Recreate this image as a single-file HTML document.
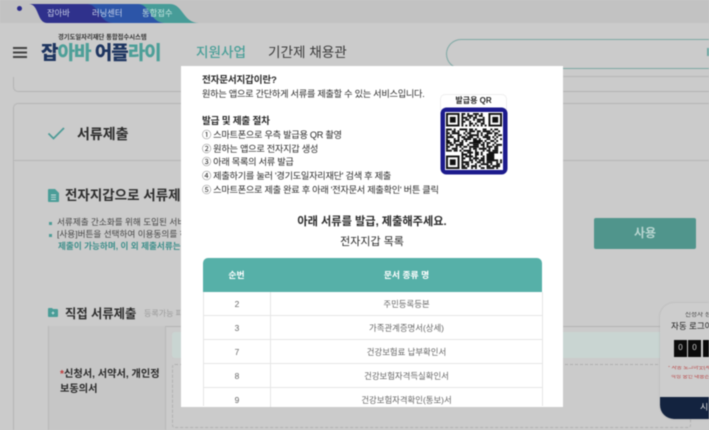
<!DOCTYPE html>
<html lang="ko"><head><meta charset="utf-8"><title>서류제출</title>
<style>
html,body{margin:0;padding:0;width:709px;height:430px;overflow:hidden}
body{position:relative;background:#cbcbcb;font-family:"Liberation Sans","Noto Sans CJK KR",sans-serif;color:#222}
.a{position:absolute;white-space:nowrap;line-height:1}
.b{font-weight:700}
#page{position:absolute;left:0;top:0;width:709px;height:430px;overflow:hidden;filter:blur(.45px)}
#modal{position:absolute;left:181px;top:66px;width:382px;height:341px;background:#fff;overflow:hidden}
#modal .a{color:#2b2b2b}
.m{font-size:9.2px;letter-spacing:-.28px}
.row{position:absolute;left:22px;width:338px;height:23px;border-bottom:1px solid #e6e6e6;border-left:1px solid #e6e6e6;border-right:1px solid #e6e6e6;box-sizing:content-box}
.row span{position:absolute;top:7px;font-size:8.4px;line-height:11px;color:#666;text-align:center}
.row .n{left:0;width:66px}
.row .t{left:67px;width:271px}
</style></head>
<body>
<div id="page">
<div class="a" style="left:0;top:0;width:709px;height:23px;background:#c2c2c2"></div>
<div class="a" style="left:17px;top:6px;width:5px;height:5px;border-radius:50%;background:#2c2c8a"></div>
<svg class="a" style="left:25px;top:3px" width="175" height="21" viewBox="0 0 175 21">
<path d="M105 1H145C158 1 158 20 174 20H120Z" fill="#479c98"/>
<path d="M55 1H113C125 1 125 20 140 20H70Z" fill="#2c55a8"/>
<path d="M4 1H62C74 1 74 20 88 20H22C12 20 14 1 4 1Z" fill="#2f318c"/>
</svg>
<div class="a" style="left:47px;top:9px;font-size:8.3px;color:#c9cfe6">잡아바</div>
<div class="a" style="left:92px;top:9px;font-size:8.3px;color:#c9d3ea">러닝센터</div>
<div class="a" style="left:142px;top:9px;font-size:8.3px;color:#c4e4df">통합접수</div>

<div class="a" style="left:13px;top:47px;width:14px;height:2px;background:#444;box-shadow:0 4.5px 0 #444,0 9px 0 #444"></div>
<div class="a b" style="left:58px;top:35px;font-size:6.3px;color:#333">경기도일자리재단 통합접수시스템</div>
<div class="a" style="left:41px;top:44px;font-size:19px;font-weight:900;letter-spacing:-1px;color:#1e3560">잡<span style="color:#4d9f98">아바</span> 어플<span style="color:#4d9f98">라이</span></div>
<div class="a" style="left:196px;top:46px;font-size:13.6px;font-weight:500;color:#4a9f98">지원사업</div>
<div class="a" style="left:268px;top:46px;font-size:13.6px;color:#3a3a3a">기간제 채용관</div>
<div class="a" style="left:446px;top:39px;width:263px;height:28px;box-sizing:content-box;border:1px solid #7fa9a5;border-right:0;border-radius:15px 0 0 15px;box-sizing:border-box;height:30px"></div>
<div class="a" style="left:707px;top:48px;width:2px;height:8px;background:#6fa8a3"></div>
<div class="a" style="left:13px;top:77px;width:696px;height:15px;box-sizing:border-box;border-left:1px solid #b4b4b4;border-bottom:1px solid #b4b4b4;border-radius:0 0 0 5px"></div>
<div class="a" style="left:563px;top:76px;width:146px;height:1px;background:#b8b8b8"></div>
<div class="a" style="left:13px;top:103px;width:696px;height:327px;box-sizing:border-box;border-left:1px solid #b6b6b6;border-top:1px solid #b6b6b6;border-radius:5px 0 0 0"></div>
<div class="a" style="left:14px;top:160px;width:695px;height:1px;background:#b8b8b8"></div>
<svg class="a" style="left:47px;top:126px" width="19" height="15" viewBox="0 0 19 15"><path d="M1.5 7.5L6.5 12.5L17 2" fill="none" stroke="#4f9c97" stroke-width="1.8"/></svg>
<div class="a b" style="left:77px;top:127px;font-size:14px;color:#2d2d2d">서류제출</div>
<svg class="a" style="left:48px;top:189px" width="11" height="13" viewBox="0 0 11 13"><path d="M0 1Q0 0 1 0H7L11 4V12Q11 13 10 13H1Q0 13 0 12Z" fill="#4a9d98"/><path d="M3 6H8M3 8.2H8M3 10.4H8" stroke="#cbe0de" stroke-width=".9"/></svg>
<div class="a b" style="left:65px;top:189px;font-size:13.5px;color:#2d2d2d">전자지갑으로 서류제출</div>
<div class="a" style="left:49px;top:222px;width:3px;height:3px;background:#4f9c97"></div>
<div class="a" style="left:57px;top:218px;font-size:8.6px;color:#444">서류제출 간소화를 위해 도입된 서비스</div>
<div class="a" style="left:49px;top:234px;width:3px;height:3px;background:#4f9c97"></div>
<div class="a" style="left:57px;top:230px;font-size:8.6px;color:#444">[사용]버튼을 선택하여 이용동의를 하</div>
<div class="a b" style="left:58px;top:242px;font-size:8.6px;color:#3f8f8b">제출이 가능하며, 이 외 제출서류는 반</div>
<div class="a" style="left:594px;top:218px;width:102px;height:31px;border-radius:2px;background:#50958c"></div>
<div class="a b" style="left:594px;top:227px;width:102px;text-align:center;font-size:12px;color:#b9d6d1">사용</div>

<svg class="a" style="left:48px;top:308px" width="10" height="9" viewBox="0 0 10 9"><path d="M0 1Q0 0 1 0H4L5 1H9Q10 1 10 2V8Q10 9 9 9H1Q0 9 0 8Z" fill="#4a9d98"/><path d="M3.5 5H6.5M5 3.5V6.5" stroke="#d8e8e6" stroke-width=".8"/></svg>
<div class="a b" style="left:65px;top:308px;font-size:12.3px;color:#2d2d2d">직접 서류제출</div>
<div class="a" style="left:144px;top:310px;font-size:8px;color:#999">등록가능 파</div>
<div class="a" style="left:48px;top:326px;width:661px;height:1px;background:#b4b4b4"></div>
<div class="a" style="left:48px;top:326px;width:118px;height:104px;box-sizing:border-box;background:#c6c6c6;border-left:1px solid #b8b8b8;border-right:1px solid #b8b8b8"></div>
<div class="a" style="left:172px;top:332px;width:520px;height:26px;border-radius:3px;background:#c9d5d2"></div>
<div class="a" style="left:172px;top:364px;width:517px;height:62px;border:1px dashed #b0b0b0;border-radius:3px"></div>
<div class="a b" style="left:60px;top:367px;font-size:10.2px;line-height:15px;color:#2a2a2a;white-space:normal;width:104px"><span style="color:#c03a3a">*</span>신청서, 서약서, 개인정<br>보동의서</div>

<div class="a" style="left:660px;top:303px;width:49px;height:116px;border-radius:14px 0 0 14px;background:#cdcdcd;overflow:hidden;box-shadow:0 0 2px rgba(0,0,0,.15)">
  <div class="a" style="left:0;bottom:0;width:49px;height:22px;background:#13233f"></div>
  <div class="a" style="left:40px;top:100px;width:9px;overflow:hidden;font-size:9px;color:#ddd">시</div>
  <div class="a" style="left:25px;top:9px;width:24px;overflow:hidden;font-size:6.5px;color:#444">신청자 정</div>
  <div class="a" style="left:11px;top:19px;width:38px;overflow:hidden;font-size:8.5px;color:#222">자동 로그아</div>
  <div class="a" style="left:14px;top:37px;width:13px;height:17px;background:#0b0b0b;color:#ccc;font-size:8px;line-height:15px;text-align:center">0</div>
  <div class="a" style="left:28px;top:37px;width:13px;height:17px;background:#0b0b0b;color:#ccc;font-size:8px;line-height:15px;text-align:center">0</div>
  <div class="a" style="left:43px;top:37px;width:6px;height:17px;background:#0b0b0b"></div>
  <div class="a" style="left:8px;top:63px;width:41px;overflow:hidden;font-size:5.5px;color:#b73a3a">* 자동 로그아웃(세</div>
  <div class="a" style="left:11px;top:72px;width:38px;overflow:hidden;font-size:5.5px;color:#b73a3a">작성 중인 내용은</div>
</div>

<div id="modal">
  <div class="a b" style="left:21px;top:10px;font-size:9.6px;letter-spacing:-.2px">전자문서지갑이란?</div>
  <div class="a m" style="left:21px;top:24px">원하는 앱으로 간단하게 서류를 제출할 수 있는 서비스입니다.</div>
  <div class="a b" style="left:21px;top:51px;font-size:9.6px;letter-spacing:-.2px">발급 및 제출 절차</div>
  <div class="a m" style="left:21px;top:65px">① 스마트폰으로 우측 발급용 QR 촬영</div>
  <div class="a m" style="left:21px;top:79px">② 원하는 앱으로 전자지갑 생성</div>
  <div class="a m" style="left:21px;top:92px">③ 아래 목록의 서류 발급</div>
  <div class="a m" style="left:21px;top:106px">④ 제출하기를 눌러 '경기도일자리재단' 검색 후 제출</div>
  <div class="a m" style="left:21px;top:120px">⑤ 스마트폰으로 제출 완료 후 아래 '전자문서 제출확인' 버튼 클릭</div>

  <div class="a" style="left:259px;top:28px;width:67px;height:16px;border:1px solid #eee;border-bottom:0;border-radius:5px 5px 0 0;box-sizing:border-box"></div>
  <div class="a b" style="left:259px;top:31px;width:67px;text-align:center;font-size:8px">발급용 QR</div>
  <svg class="a" style="left:259px;top:41px" width="68" height="68" viewBox="0 0 68 68">
    <rect x="0.5" y="0.5" width="67" height="67" rx="6" fill="#1c1a8c"/>
    <rect x="5" y="5" width="58" height="58" fill="#fff"/>
    <g transform="translate(6 6) scale(1.931)" fill="none" stroke="#111" stroke-width="1">
      <path d="M0 .5H7M22 .5H29M0 6.5H7M22 6.5H29M0 22.5H7M0 28.5H7"/>
      <path d="M.5 0V7M6.5 0V7M22.5 0V7M28.5 0V7M.5 22V29M6.5 22V29"/>
      <path fill="#111" stroke="none" d="M2 2h3v3H2zM24 2h3v3h-3zM2 24h3v3H2zM21 21h4v4h-4z"/>
      <path d="M8 .5H21" stroke-dasharray="2 1 1 2 3 1 1 2"/>
      <path d="M8 1.5H21" stroke-dasharray="1 2 3 1 1 1 2 2"/>
      <path d="M8 2.5H21" stroke-dasharray="3 1 1 1 2 3 1 1"/>
      <path d="M8 3.5H21" stroke-dasharray="1 1 2 2 1 1 4 1"/>
      <path d="M8 4.5H21" stroke-dasharray="2 2 1 3 2 1 1 1"/>
      <path d="M8 5.5H21" stroke-dasharray="1 3 2 1 1 2 2 1"/>
      <path d="M8 6.5H21" stroke-dasharray="1 1 1 1 1 1 1 1"/>
      <path d="M0 8.5H29" stroke-dasharray="3 1 1 2 4 1 2 1 1 3 2 2 1 1 2 2"/>
      <path d="M0 9.5H29" stroke-dasharray="1 2 2 1 1 3 1 1 3 1 2 1 4 1 1 2 1 2"/>
      <path d="M0 10.5H29" stroke-dasharray="2 1 4 2 1 1 2 3 1 1 1 2 3 1 2 2"/>
      <path d="M0 11.5H29" stroke-dasharray="1 1 1 3 2 2 1 1 5 1 1 1 2 3 1 1 2"/>
      <path d="M0 12.5H29" stroke-dasharray="4 2 1 1 2 1 3 2 1 2 4 1 1 1 1"/>
      <path d="M0 13.5H29" stroke-dasharray="1 3 1 1 1 2 4 1 2 1 1 3 2 2 1 2 1"/>
      <path d="M0 14.5H29" stroke-dasharray="2 2 3 1 1 1 1 3 5 1 1 2 2 1 1 2"/>
      <path d="M0 15.5H29" stroke-dasharray="3 1 1 2 2 3 6 1 1 1 2 2 1 3"/>
      <path d="M0 16.5H29" stroke-dasharray="1 1 2 1 4 2 1 2 3 1 2 1 1 2 1 1 3"/>
      <path d="M0 17.5H29" stroke-dasharray="2 3 1 1 1 1 2 1 5 2 1 1 3 1 2 2"/>
      <path d="M0 18.5H29" stroke-dasharray="1 2 3 2 1 3 1 1 2 1 4 1 1 2 2 2"/>
      <path d="M0 19.5H29" stroke-dasharray="3 1 2 1 1 1 4 2 1 3 1 1 2 1 3 2"/>
      <path d="M8 20.5H29" stroke-dasharray="1 2 3 1 2 1 1 3 5 1 1 1"/>
      <path d="M8 21.5H21" stroke-dasharray="3 1 1 2 2 1 1 2"/>
      <path d="M8 22.5H21" stroke-dasharray="1 1 4 1 1 3 1 1"/>
      <path d="M8 23.5H21" stroke-dasharray="2 2 1 1 3 1 2 1"/>
      <path d="M8 24.5H29" stroke-dasharray="1 3 2 1 1 1 3 2 1 1 3 1 2"/>
      <path d="M8 25.5H29" stroke-dasharray="4 1 1 2 2 1 1 1 3 2 1 1 1 1"/>
      <path d="M8 26.5H29" stroke-dasharray="1 1 2 3 1 2 4 1 1 2 2 1"/>
      <path d="M8 27.5H29" stroke-dasharray="2 1 1 1 3 1 1 3 2 1 4 2"/>
      <path d="M8 28.5H29" stroke-dasharray="3 2 1 1 1 2 2 1 4 1 1 2"/>
    </g>
  </svg>

  <div class="a b" style="left:0;top:151px;width:382px;text-align:center;font-size:11.2px">아래 서류를 발급, 제출해주세요.</div>
  <div class="a" style="left:0;top:171px;width:382px;text-align:center;font-size:11px">전자지갑 목록</div>

  <div class="a" style="left:22px;top:192px;width:339px;height:34px;background:#56b0a8;border-radius:5px 5px 0 0"></div>
  <div class="a b" style="left:22px;top:205px;width:67px;text-align:center;font-size:8.8px;color:#fff">순번</div>
  <div class="a b" style="left:90px;top:205px;width:271px;text-align:center;font-size:8.8px;color:#fff">문서 종류 명</div>
  <div class="row" style="top:226px"><span class="n">2</span><span class="t">주민등록등본</span></div>
  <div class="row" style="top:250px"><span class="n">3</span><span class="t">가족관계증명서(상세)</span></div>
  <div class="row" style="top:274px"><span class="n">7</span><span class="t">건강보험료 납부확인서</span></div>
  <div class="row" style="top:298px"><span class="n">8</span><span class="t">건강보험자격득실확인서</span></div>
  <div class="row" style="top:322px;height:18px;border-bottom:0"><span class="n">9</span><span class="t">건강보험자격확인(통보)서</span></div>
  <div class="a" style="left:89px;top:226px;width:1px;height:115px;background:#e6e6e6"></div>
</div>
</div>
</body></html>
